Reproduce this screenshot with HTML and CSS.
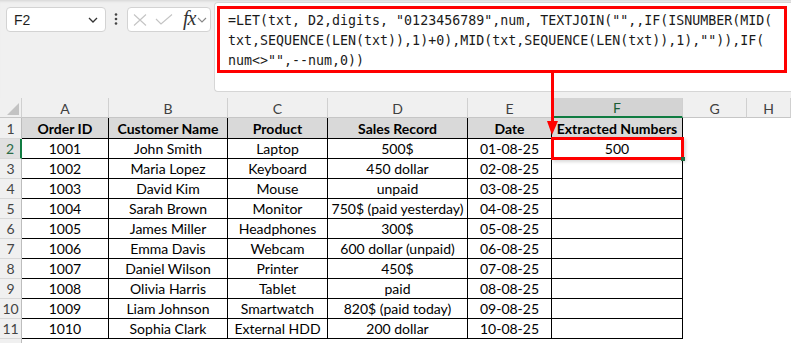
FILE: index.html
```html
<!DOCTYPE html>
<html lang="en">

<head>
    <link rel="stylesheet" href="styles.css">
</head>

<body>

    <div id="app">
        <div id="top-bar">
            <div id="name-box">
                <span>F2</span>
                <svg width="10" height="6" viewBox="0 0 10 6"><path d="M1 1 L5 5 L9 1" fill="none" stroke="#333" stroke-width="1.3"/></svg>
            </div>
            <svg id="dots" width="4" height="12" viewBox="0 0 4 12">
                <circle cx="2" cy="1.5" r="1.3" fill="#444"/>
                <circle cx="2" cy="6" r="1.3" fill="#444"/>
                <circle cx="2" cy="10.5" r="1.3" fill="#444"/>
            </svg>
            <div id="fx-box">
                <svg width="14" height="12" viewBox="0 0 14 12"><path d="M1 0.5 L13 11.5 M13 0.5 L1 11.5" stroke="#c4c4c4" stroke-width="1.1"/></svg>
                <svg width="18" height="11" viewBox="0 0 18 11"><path d="M1 5 L6 10 L17 0.5" fill="none" stroke="#c4c4c4" stroke-width="1.1"/></svg>
                <span id="fx">fx</span>
                <svg width="10" height="6" viewBox="0 0 10 6"><path d="M1 1 L5 5 L9 1" fill="none" stroke="#888" stroke-width="1.1"/></svg>
            </div>
            <div id="formula-bar">
                <div class="formula-line">=LET(txt, D2,digits, "0123456789",num, TEXTJOIN("",,IF(ISNUMBER(MID(</div>
                <div class="formula-line">txt,SEQUENCE(LEN(txt)),1)+0),MID(txt,SEQUENCE(LEN(txt)),1),"")),IF(</div>
                <div class="formula-line">num&lt;&gt;"",--num,0))</div>
            </div>
        </div>

        <div id="sheet">
            <div class="row col-heads">
                <div class="corner"><span class="triangle"></span></div>
                <div class="col-head">A</div>
                <div class="col-head">B</div>
                <div class="col-head">C</div>
                <div class="col-head">D</div>
                <div class="col-head">E</div>
                <div class="col-head selected">F</div>
                <div class="col-head">G</div>
                <div class="col-head">H</div>
            </div>
            <div class="row first">
                <div class="row-head">1</div>
                <div class="cell title">Order ID</div>
                <div class="cell title">Customer Name</div>
                <div class="cell title">Product</div>
                <div class="cell title">Sales Record</div>
                <div class="cell title">Date</div>
                <div class="cell title">Extracted Numbers</div>
                <div class="empty"></div>
                <div class="empty"></div>
            </div>
            <div class="row">
                <div class="row-head selected">2</div>
                <div class="cell">1001</div>
                <div class="cell">John Smith</div>
                <div class="cell">Laptop</div>
                <div class="cell">500$</div>
                <div class="cell">01-08-25</div>
                <div class="cell">500</div>
                <div class="empty"></div>
                <div class="empty"></div>
            </div>
            <div class="row">
                <div class="row-head">3</div>
                <div class="cell">1002</div>
                <div class="cell">Maria Lopez</div>
                <div class="cell">Keyboard</div>
                <div class="cell">450 dollar</div>
                <div class="cell">02-08-25</div>
                <div class="cell"></div>
                <div class="empty"></div>
                <div class="empty"></div>
            </div>
            <div class="row">
                <div class="row-head">4</div>
                <div class="cell">1003</div>
                <div class="cell">David Kim</div>
                <div class="cell">Mouse</div>
                <div class="cell">unpaid</div>
                <div class="cell">03-08-25</div>
                <div class="cell"></div>
                <div class="empty"></div>
                <div class="empty"></div>
            </div>
            <div class="row">
                <div class="row-head">5</div>
                <div class="cell">1004</div>
                <div class="cell">Sarah Brown</div>
                <div class="cell">Monitor</div>
                <div class="cell">750$ (paid yesterday)</div>
                <div class="cell">04-08-25</div>
                <div class="cell"></div>
                <div class="empty"></div>
                <div class="empty"></div>
            </div>
            <div class="row">
                <div class="row-head">6</div>
                <div class="cell">1005</div>
                <div class="cell">James Miller</div>
                <div class="cell">Headphones</div>
                <div class="cell">300$</div>
                <div class="cell">05-08-25</div>
                <div class="cell"></div>
                <div class="empty"></div>
                <div class="empty"></div>
            </div>
            <div class="row">
                <div class="row-head">7</div>
                <div class="cell">1006</div>
                <div class="cell">Emma Davis</div>
                <div class="cell">Webcam</div>
                <div class="cell">600 dollar (unpaid)</div>
                <div class="cell">06-08-25</div>
                <div class="cell"></div>
                <div class="empty"></div>
                <div class="empty"></div>
            </div>
            <div class="row">
                <div class="row-head">8</div>
                <div class="cell">1007</div>
                <div class="cell">Daniel Wilson</div>
                <div class="cell">Printer</div>
                <div class="cell">450$</div>
                <div class="cell">07-08-25</div>
                <div class="cell"></div>
                <div class="empty"></div>
                <div class="empty"></div>
            </div>
            <div class="row">
                <div class="row-head">9</div>
                <div class="cell">1008</div>
                <div class="cell">Olivia Harris</div>
                <div class="cell">Tablet</div>
                <div class="cell">paid</div>
                <div class="cell">08-08-25</div>
                <div class="cell"></div>
                <div class="empty"></div>
                <div class="empty"></div>
            </div>
            <div class="row">
                <div class="row-head">10</div>
                <div class="cell">1009</div>
                <div class="cell">Liam Johnson</div>
                <div class="cell">Smartwatch</div>
                <div class="cell">820$ (paid today)</div>
                <div class="cell">09-08-25</div>
                <div class="cell"></div>
                <div class="empty"></div>
                <div class="empty"></div>
            </div>
            <div class="row">
                <div class="row-head">11</div>
                <div class="cell">1010</div>
                <div class="cell">Sophia Clark</div>
                <div class="cell">External HDD</div>
                <div class="cell">200 dollar</div>
                <div class="cell">10-08-25</div>
                <div class="cell"></div>
                <div class="empty"></div>
                <div class="empty"></div>
            </div>
            <div class="row last">
                <div class="row-head"></div>
                <div class="empty"></div>
                <div class="empty"></div>
                <div class="empty"></div>
                <div class="empty"></div>
                <div class="empty"></div>
                <div class="empty"></div>
                <div class="empty"></div>
                <div class="empty"></div>
            </div>
        </div>

        <!-- red annotations -->
        <div id="formula-mark"></div>
        <div id="arrow-line"></div>
        <div id="arrow-head"></div>
        <div id="cell-mark"></div>
        <div id="fill-handle"></div>
    </div>

</body>

</html>
```

FILE: styles.css
```css
body {
    margin: 0;
    font-family: Lato, "Liberation Sans", sans-serif;
}

#app {
    position: relative;
    width: 791px;
    height: 343px;
    overflow: hidden;
    background-color: #f0f0f0;
}

#top-bar {
    display: flex;
    align-items: flex-start;
    height: 98px;
    padding-left: 6px;
    box-sizing: border-box;
    box-shadow: inset 0 3px 3px -2px rgba(0, 0, 0, 0.12);
}

#name-box {
    display: flex;
    align-items: center;
    justify-content: space-between;
    margin-top: 7px;
    width: 100px;
    height: 25px;
    padding: 0 7px 0 7px;
    box-sizing: border-box;
    background-color: white;
    border: 1px solid #d3d3d3;
    border-radius: 4px;
    font-family: "Liberation Sans", sans-serif;
    font-size: 14px;
    color: #1f1f1f;
}

#dots {
    margin: 13px 0 0 8px;
}

#fx-box {
    display: flex;
    align-items: center;
    gap: 8px;
    margin: 7px 0 0 9px;
    width: 84px;
    height: 25px;
    padding-left: 5px;
    box-sizing: border-box;
    background-color: white;
    border: 1px solid #d3d3d3;
    border-radius: 4px;
}

#fx {
    margin: -2px -6px 0 2px;
    font-family: "Liberation Serif", serif;
    font-style: italic;
    font-size: 20px;
    color: #333;
    letter-spacing: -1px;
}

#formula-bar {
    flex: 1;
    margin: 2px 0 0 3px;
    height: 90px;
    padding: 8px 0 0 13px;
    box-sizing: border-box;
    background-color: white;
    border: 1px solid #d6d6d6;
    border-right: none;
    border-radius: 4px 0 0 4px;
    font-family: "DejaVu Sans Mono", monospace;
    font-size: 13.3px;
    line-height: 20px;
    color: #1a1a1a;
}

.formula-line {
    white-space: pre;
}

/* sheet */

.row {
    display: grid;
    grid-template-columns: 22px 87px 119px 100px 140px 84px 131px 64px 44px;
    height: 20px;
}

.row>div {
    box-sizing: border-box;
    display: flex;
    align-items: center;
    justify-content: center;
}

.col-heads {
    height: 20px;
}

.corner {
    border-right: 1px solid #d0d0d0;
    border-bottom: 1px solid #c6c6c6;
    align-items: flex-end !important;
    justify-content: flex-end !important;
    padding: 0 2px 2px 0;
}

.triangle {
    width: 0;
    height: 0;
    border-left: 12px solid transparent;
    border-bottom: 12px solid #c3c3c3;
}

.col-head {
    border-right: 1px solid #d0d0d0;
    border-bottom: 1px solid #c6c6c6;
    font-size: 14px;
    color: #404040;
    padding-top: 1px;
}

.col-head.selected {
    background-color: #d3d3d3;
    color: #1b5e36;
    border-bottom: 2px solid #107c41;
}

.first {
    height: 21px;
}

.row-head {
    background-color: #f0f0f0;
    border-right: 1px solid #bdbdbd;
    border-bottom: 1px solid #d8d8d8;
    font-size: 14px;
    color: #444;
}

.row-head.selected {
    background-color: #e0e0e0;
    color: #2b6b47;
    border-right: 2px solid #107c41;
}

.cell {
    background-color: white;
    border-right: 1px solid black;
    border-bottom: 1px solid black;
    font-size: 14px;
    color: black;
    white-space: nowrap;
}

.cell.title {
    background-color: #d9d9d9;
    font-weight: bold;
}

.empty {
    background-color: white;
}

.last {
    height: 10px;
}

/* annotations */

#formula-mark {
    position: absolute;
    left: 217px;
    top: 6px;
    width: 570px;
    height: 67px;
    border: 3px solid #ff0000;
    box-sizing: border-box;
}

#arrow-line {
    position: absolute;
    left: 551px;
    top: 72px;
    width: 3px;
    height: 52px;
    background-color: #ff0000;
}

#arrow-head {
    position: absolute;
    left: 547px;
    top: 121px;
    width: 0;
    height: 0;
    border-left: 5px solid transparent;
    border-right: 6px solid transparent;
    border-top: 14px solid #ff0000;
}

#cell-mark {
    position: absolute;
    left: 551px;
    top: 137px;
    width: 133px;
    height: 23px;
    border: 3px solid #ff0000;
    box-sizing: border-box;
    box-shadow: 2px 2px 3px rgba(0, 0, 0, 0.15);
}

#fill-handle {
    position: absolute;
    left: 681px;
    top: 157px;
    width: 4px;
    height: 4px;
    background-color: #1e6b3f;
}
```
